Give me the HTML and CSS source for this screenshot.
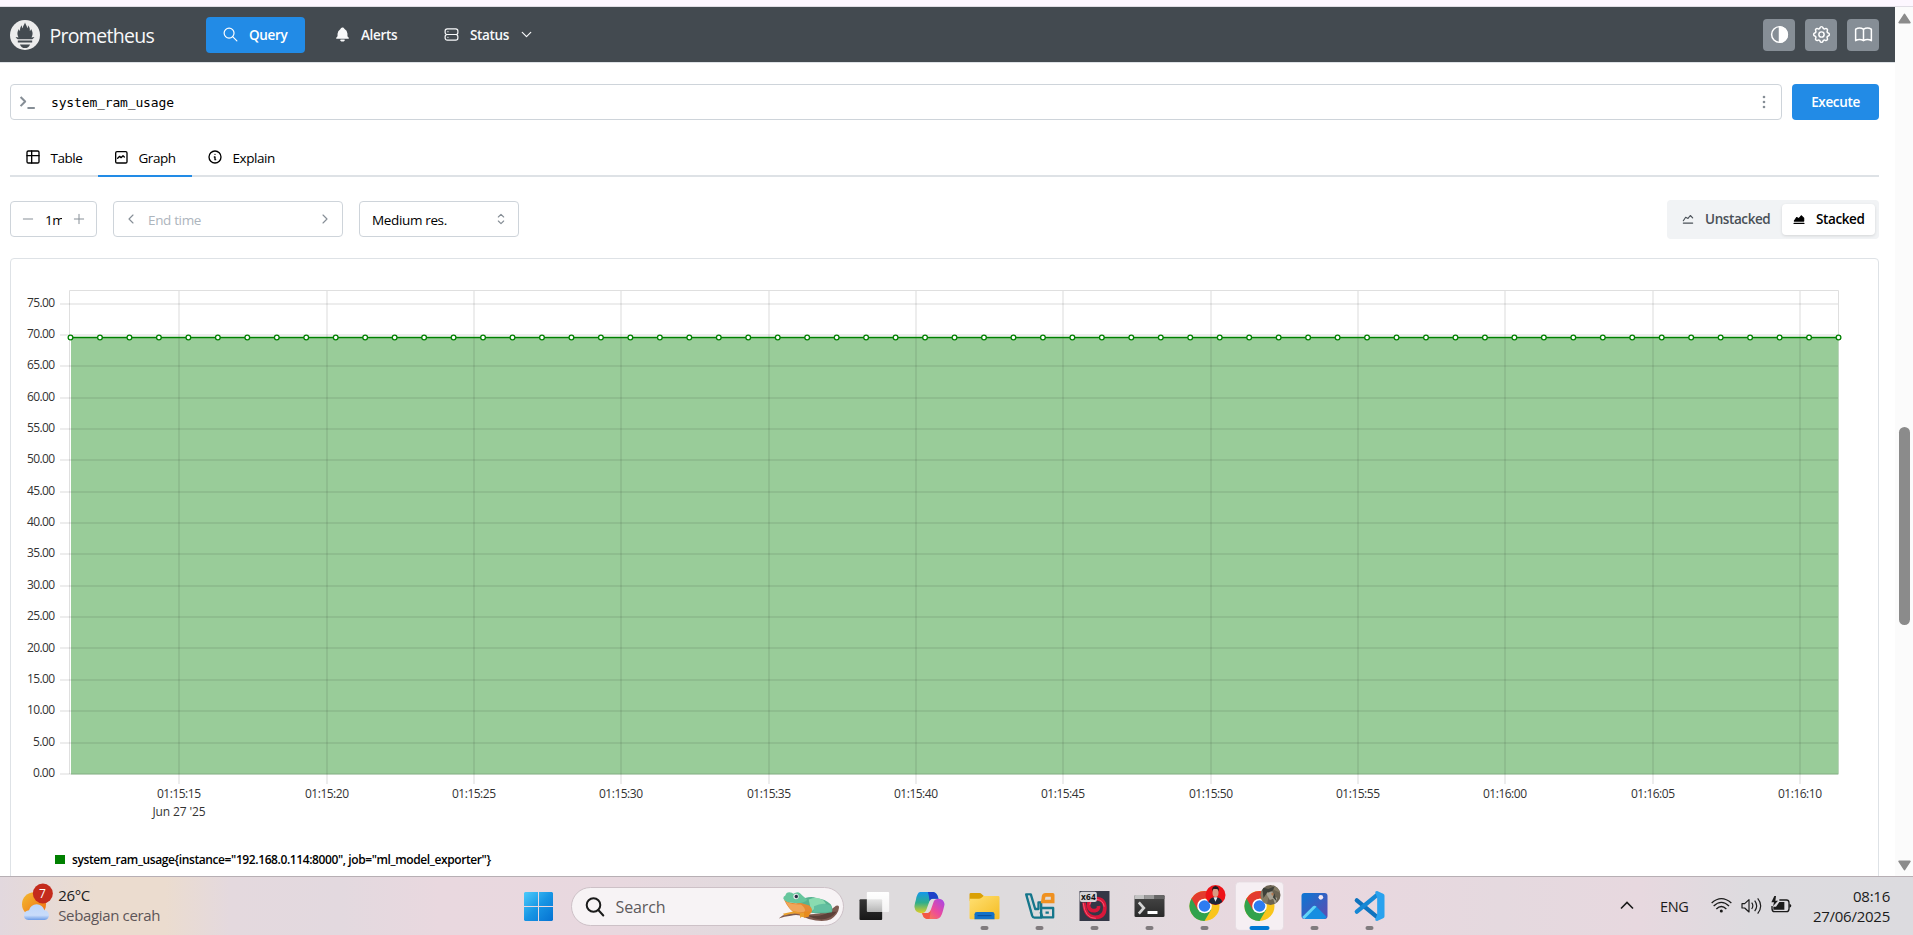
FILE: index.html
```html
<!DOCTYPE html>
<html lang="en">
<head>
<meta charset="utf-8">
<title>Prometheus Time Series Collection and Processing Server</title>
<link rel="stylesheet" href="styles.css">
</head>
<body>
<div class="browser-edge"></div>
<div class="viewport">
  <div class="page">
    <header class="header">
      <svg class="logo" viewBox="0 0 28 30" preserveAspectRatio="none"><ellipse cx="14" cy="15" rx="14" ry="15" fill="#ececec"/><path d="M14 2.500c.6 2.300 1.900 3.200 2 5.800.9-.8.8-2 .7-3 1.700 1.900 2 3.800 1.800 5.700.7-.4 1-1.100 1.200-2 1.400 2.700 2.100 4.800.4 8.500l2.700-.5c-.6 1.100-1.200 1.700-2 2.300H7.200c-.9-.7-1.500-1.300-2-2.300l2.700.5C6.300 14 6.700 11.500 8.300 9c.1.900.5 1.600 1.100 2-.2-2 .2-3.900 1.700-5.700 0 1.100-.1 2.200.7 3 .2-2.600 1.700-3.300 2.200-5.800zM7.300 20.500h13.400v1.900H7.300zM9.300 24.400h9.400c-.7 2.400-2.500 3.600-4.700 3.600s-4-1.200-4.700-3.600z" fill="#434a50"/></svg>
      <span class="brand">Prometheus</span>
      <nav class="nav">
        <a class="nav-link active"><svg class="ti" viewBox="0 0 24 24"><circle cx="10" cy="10" r="7"/><path d="M21 21l-6-6"/></svg><span>Query</span></a>
        <a class="nav-link"><svg class="ti" viewBox="0 0 24 24"><path fill="currentColor" stroke="none" d="M14.235 19c.865 0 1.322 1.024.745 1.668A4 4 0 0 1 12 22a4 4 0 0 1-2.980-1.332c-.552-.616-.158-1.579.634-1.661l.110-.006zM12 2c1.358 0 2.506.903 2.875 2.141l.046.171.008.043a8.013 8.013 0 0 1 4.024 6.069l.028.287L19 11v2.931l.021.136a3 3 0 0 0 1.143 1.847l.167.117.162.099c.860.487.560 1.766-.377 1.864L20 18H4c-1.028 0-1.387-1.364-.493-1.870a3 3 0 0 0 1.472-2.063L5 13.924l.001-2.970A8 8 0 0 1 8.822 4.500l.248-.146.010-.043a3 3 0 0 1 2.562-2.290l.182-.017z"/></svg><span>Alerts</span></a>
        <a class="nav-link"><svg class="ti" viewBox="0 0 24 24"><rect x="3" y="4" width="18" height="8" rx="3"/><rect x="3" y="12" width="18" height="8" rx="3"/><path d="M7 8v.01M7 16v.01"/></svg><span>Status</span><svg class="ti chev" viewBox="0 0 24 24"><path d="M6 9l6 6 6-6"/></svg></a>
      </nav>
      <div class="actions">
        <button class="action"><svg class="ti" viewBox="0 0 24 24"><circle cx="12" cy="12" r="9"/><path fill="currentColor" d="M12 3a9 9 0 0 1 0 18z"/></svg></button>
        <button class="action"><svg class="ti" viewBox="0 0 24 24"><path d="M10.325 4.317c.426-1.756 2.924-1.756 3.350 0a1.724 1.724 0 0 0 2.573 1.066c1.543-.94 3.310.826 2.370 2.370a1.724 1.724 0 0 0 1.065 2.572c1.756.426 1.756 2.924 0 3.350a1.724 1.724 0 0 0-1.066 2.573c.94 1.543-.826 3.310-2.370 2.370a1.724 1.724 0 0 0-2.572 1.065c-.426 1.756-2.924 1.756-3.350 0a1.724 1.724 0 0 0-2.573-1.066c-1.543.94-3.310-.826-2.370-2.370a1.724 1.724 0 0 0-1.065-2.572c-1.756-.426-1.756-2.924 0-3.350a1.724 1.724 0 0 0 1.066-2.573c-.94-1.543.826-3.310 2.370-2.370 1 .608 2.296.070 2.572-1.065z"/><circle cx="12" cy="12" r="3"/></svg></button>
        <button class="action"><svg class="ti" viewBox="0 0 24 24"><path d="M3 19a9 9 0 0 1 9 0 9 9 0 0 1 9 0M3 6a9 9 0 0 1 9 0 9 9 0 0 1 9 0M3 6v13M12 6v13M21 6v13"/></svg></button>
      </div>
    </header>

    <main class="main">
      <div class="query-row">
        <div class="query-input">
          <svg class="ti prompt" viewBox="0 0 24 24"><path d="M5 6.500l5 5-5 5M12.500 18.500h8"/></svg>
          <code>system_ram_usage</code>
          <svg class="dots" viewBox="0 0 4 14"><circle cx="2" cy="2" r="1.300"/><circle cx="2" cy="7" r="1.300"/><circle cx="2" cy="12" r="1.300"/></svg>
        </div>
        <button class="execute">Execute</button>
      </div>

      <div class="tabs">
        <a class="tab tab-table"><svg class="ti" viewBox="0 0 24 24"><rect x="3" y="3" width="18" height="18" rx="2"/><path d="M3 10h18M10 3v18"/></svg><span>Table</span></a>
        <a class="tab tab-graph active"><svg class="ti" viewBox="0 0 24 24"><rect x="4" y="4" width="17" height="17" rx="2"/><path d="M7 14l3-3 2 2 3-3 2 2"/></svg><span>Graph</span></a>
        <a class="tab tab-explain"><svg class="ti" viewBox="0 0 24 24"><circle cx="12" cy="12" r="9"/><path d="M12 8h.01M11 12h1v4h1"/></svg><span>Explain</span></a>
      </div>

      <div class="controls">
        <div class="field range"><svg class="ti" viewBox="0 0 24 24"><path d="M4 12h16"/></svg><span class="range-value">1m</span><svg class="ti" viewBox="0 0 24 24"><path d="M4 12h16M12 4v16"/></svg></div>
        <div class="field end-time"><svg class="ti" viewBox="0 0 24 24"><path d="M15 6l-6 6 6 6"/></svg><span>End time</span><svg class="ti" viewBox="0 0 24 24"><path d="M9 6l6 6-6 6"/></svg></div>
        <div class="field resolution"><span>Medium res.</span><svg class="ti" viewBox="0 0 24 24"><path d="M8 9l4-4 4 4M8 15l4 4 4-4"/></svg></div>
        <div class="segmented">
          <span class="segment"><svg class="ti" viewBox="0 0 24 24"><path d="M4 19h16M4 15l4-6 4 2 4-5 4 4"/></svg><b>Unstacked</b></span>
          <span class="segment selected"><svg class="ti" viewBox="0 0 24 24"><path d="M3.500 19.500h17"/><path fill="currentColor" d="M4 15.500l4-6 4 2 4-5 4 4v5z"/></svg><b>Stacked</b></span>
        </div>
      </div>

      <section class="card">
        <svg class="chart" viewBox="11 259 1867 572" width="1867" height="572">
          <path fill="none" stroke="#dfdfdf" d="M69.500 774V290.500H1838.500V774"/>
          <path fill="#99cc99" d="M71 337h1767.500v437.500H71z"/>
          <path class="grid" d="M60 304H1838M60 335H1838M60 366H1838M60 398H1838M60 429H1838M60 460H1838M60 492H1838M60 523H1838M60 554H1838M60 586H1838M60 617H1838M60 648H1838M60 680H1838M60 711H1838M60 743H1838M60 774H1838"/>
          <path class="grid" d="M179 291V784M327 291V784M474 291V784M621 291V784M769 291V784M916 291V784M1063 291V784M1211 291V784M1358 291V784M1505 291V784M1653 291V784M1800 291V784"/>
          <path stroke="#008000" stroke-width="1.500" d="M71 337.500H1838.500"/>
          <path class="point-ring" d="M70.500 337.500H1839"/>
          <path class="point-core" d="M70.500 337.500H1839"/>
          <g class="axis axis-y">
            <text x="55" y="307" textLength="28">75.00</text><text x="55" y="338" textLength="28">70.00</text><text x="55" y="369" textLength="28">65.00</text><text x="55" y="401" textLength="28">60.00</text><text x="55" y="432" textLength="28">55.00</text><text x="55" y="463" textLength="28">50.00</text><text x="55" y="495" textLength="28">45.00</text><text x="55" y="526" textLength="28">40.00</text><text x="55" y="557" textLength="28">35.00</text><text x="55" y="589" textLength="28">30.00</text><text x="55" y="620" textLength="28">25.00</text><text x="55" y="652" textLength="28">20.00</text><text x="55" y="683" textLength="28">15.00</text><text x="55" y="714" textLength="28">10.00</text><text x="55" y="746" textLength="22">5.00</text><text x="55" y="777" textLength="22">0.00</text>
          </g>
          <g class="axis axis-x">
            <text x="179" y="798" textLength="44">01:15:15</text><text x="179" y="816" textLength="53">Jun 27 '25</text><text x="327" y="798" textLength="44">01:15:20</text><text x="474" y="798" textLength="44">01:15:25</text><text x="621" y="798" textLength="44">01:15:30</text><text x="769" y="798" textLength="44">01:15:35</text><text x="916" y="798" textLength="44">01:15:40</text><text x="1063" y="798" textLength="44">01:15:45</text><text x="1211" y="798" textLength="44">01:15:50</text><text x="1358" y="798" textLength="44">01:15:55</text><text x="1505" y="798" textLength="44">01:16:00</text><text x="1653" y="798" textLength="44">01:16:05</text><text x="1800" y="798" textLength="44">01:16:10</text>
          </g>
        </svg>
        <div class="legend"><i></i><span>system_ram_usage{instance="192.168.0.114:8000", job="ml_model_exporter"}</span></div>
      </section>
    </main>
  </div>
  <div class="scrollbar">
    <svg viewBox="0 0 12 10"><path d="M6 1.200L11 8.800H1z"/></svg>
    <div class="thumb"></div>
    <svg viewBox="0 0 12 10"><path d="M6 8.800L11 1.200H1z"/></svg>
  </div>
</div>

<footer class="taskbar">
  <div class="weather">
    <svg viewBox="63 430 98 114">
      <defs><linearGradient id="sun" x2="1" y2="1"><stop offset="0" stop-color="#f3bb30"/><stop offset="1" stop-color="#f06b12"/></linearGradient><linearGradient id="cloud" x2="0" y2="1"><stop offset="0" stop-color="#bcd6fb"/><stop offset=".7" stop-color="#c9dcfa"/><stop offset="1" stop-color="#6d9de8"/></linearGradient></defs>
      <circle cx="102" cy="494" r="36" fill="url(#sun)"/>
      <path d="M85 541q-14-2-13-15 2-13 15-14 5-17 23-18 18 1 23 18 13 1 14 15-1 12-13 14z" fill="url(#cloud)"/>
      <circle cx="128.500" cy="461.500" r="30" fill="#c42b1c"/>
      <text x="127.500" y="474" text-anchor="middle" fill="#fff" font-size="36">7</text>
    </svg>
    <div class="weather-text"><span>26°C</span><span class="muted">Sebagian cerah</span></div>
  </div>

  <div class="apps">
    <svg class="start" viewBox="0 0 29 29"><defs><linearGradient id="win" gradientUnits="userSpaceOnUse" x2="29" y2="29"><stop offset="0" stop-color="#4ccbfb"/><stop offset=".5" stop-color="#1795e4"/><stop offset="1" stop-color="#0672d2"/></linearGradient></defs><path fill="url(#win)" d="M1 0h13v14H0V1zM15 0h13l1 1v13H15zM0 15h14v14H1l-1-1zM15 15h14v13l-1 1H15z"/></svg>
    <div class="search">
      <svg class="magnifier" viewBox="0 0 20 20"><circle cx="8.500" cy="8" r="6.800"/><path d="M13.300 13l5 5.500"/></svg>
      <span>Search</span>
      <svg class="frog" viewBox="840 64 186 98">
        <path d="M842 149q10-10 28-14 30-6 60 2 40-2 60-12 14-4 24-14 10-3 9 6-2 20-24 34-16 8-46 4-18-2-34-10-20-10-40-4-20 2-37 8z" fill="#7e5a50"/>
        <path d="M930 139q35 8 66-10l20 0q-16 22-46 23-24-2-40-13z" fill="#5d4038"/>
        <path d="M902 98q30-20 54-10 26 2 42 18 8 12 4 24-32 6-62 2-30-8-38-34z" fill="#57b391"/>
        <path d="M932 92q24-12 44 2l8 10q-24 6-44 24z" fill="#8adbb0"/>
        <path d="M948 112q28-14 50-2 6 8 2 18-28 4-56 3 6-10 4-19z" fill="#62bfa0"/>
        <path d="M858 92q20 14 48 10l28 8q14 14 4 24-26 6-46 0-22-14-34-42z" fill="#e58a35"/>
        <path d="M863 99q22 10 46 8 14 10 12 22-30 4-44-8z" fill="#f0a65a"/>
        <path d="M856 90q-1-8 6-10 2-10 12-10 9 1 12 5 12-8 20-2 8 8 22 20-12 14-48 9-18-2-24-12z" fill="#67c69d"/>
        <circle cx="894" cy="83" r="8" fill="#e4e5e8"/><ellipse cx="895" cy="83" rx="5" ry="5.500" fill="#272b42"/>
        <path d="M855 135l34-8 20 4-36 5-14 4zM905 134q12-5 18 2l-4 10-8-2-4 4z" fill="#eaa02c"/>
        <path d="M918 128h20l-6 16-14 3z" fill="#e88b1d"/>
      </svg>
    </div>
    <svg class="app" viewBox="1042.500 21 165 174"><defs><linearGradient id="tv" x2="0" y2="1"><stop offset="0" stop-color="#363636"/><stop offset="1" stop-color="#171717"/></linearGradient><linearGradient id="tv2" x2="0" y2="1"><stop offset="0" stop-color="#fff"/><stop offset="1" stop-color="#fff" stop-opacity=".66"/></linearGradient></defs><rect x="1080" y="88" width="68" height="62" rx="3" fill="url(#tv)"/><rect x="1102" y="66" width="67" height="60" rx="3" fill="url(#tv2)"/></svg>
    <svg class="app" viewBox="1207.500 21 165 174">
      <defs><linearGradient id="cp1" x2="0" y2="1"><stop offset="0" stop-color="#1597ec"/><stop offset=".5" stop-color="#2fae8c"/><stop offset="1" stop-color="#e5d021"/></linearGradient><linearGradient id="cp2" x1="1" x2="0" y2="1"><stop offset="0" stop-color="#a046ed"/><stop offset=".5" stop-color="#ec4b9c"/><stop offset="1" stop-color="#ff8b35"/></linearGradient></defs>
      <path d="M1262 66h40q12 2 15 20h-17q-8 0-11 10l-9 25q-4 9-15 9-18-2-20-18-1-4 4-22 4-23 13-24z" fill="url(#cp1)"/>
      <path d="M1285 66h17q10 2 15 20h-17q-7 0-10 7-1-16-5-27z" fill="#1e42c8"/>
      <path d="M1318 86q15 1 17 16 0 4-5 22-5 22-18 23h-30q-12-2-14-18h14q9 0 12-10l9-25q3-8 15-8z" fill="url(#cp2)"/>
      <path d="M1268 129h14q9 0 12-10l-4 28h-8q-11-2-14-18z" fill="#f35744"/>
    </svg>
    <svg class="app" viewBox="52.500 21 165 174">
      <defs><linearGradient id="fold" x2="1" y2="1"><stop offset="0" stop-color="#ffe073"/><stop offset="1" stop-color="#f5bc22"/></linearGradient></defs>
      <path d="M90 73q0-4 4-4h26q4 0 7 4l6 5v14H90z" fill="#daa005"/><path d="M90 86h29q5 0 9-4l4-4h44q4 0 4 4v62q0 4-4 4H94q-4 0-4-4z" fill="url(#fold)"/>
      <path d="M105 148v-15q0-7 7-7h46q7 0 7 7v15z" fill="#1272c8"/><path d="M114 137h42" stroke="#0a4a94" stroke-width="3"/><rect class="running" x="123" y="168" width="24" height="12" rx="6"/>
    </svg>
    <svg class="app" viewBox="217.500 21 165 174">
      <g fill="none" stroke="#15768b" stroke-width="7" stroke-linejoin="round"><path d="M260 73h14l13 44h10V97h8v46h-20q-5 0-7-6z"/><path d="M305 114h36v28h-32l-6-16M318 128h10"/></g><path d="M268 76l15 56" stroke="#c8d7d9" stroke-width="2.500"/>
      <path d="M318 69h22q5 0 5 5v26h-41l3-22q2-9 11-9z" fill="#ef9120"/><path d="M318 80h16v9h-18z" fill="#e0dbd8"/><rect class="running" x="288" y="168" width="24" height="12" rx="6"/>
    </svg>
    <svg class="app" viewBox="382.500 21 165 174">
      <rect x="420" y="63" width="90" height="90" fill="#343746"/><path d="M434 98q2 44 34 44 28-1 28-29-1-27-27-27-22 2-22 21 2 16 19 15 13-2 11-14" fill="none" stroke="#d9173a" stroke-width="11"/><path d="M431 98q5 48 38 47" fill="none" stroke="#f65a72" stroke-width="3"/><path d="M451 104q2-15 19-16 22 2 24 22" fill="none" stroke="#f65a72" stroke-width="3"/>
      <rect x="421" y="65" width="51" height="31" rx="6" fill="#d6d4d6"/><text x="446.500" y="90" text-anchor="middle" font-size="25" font-weight="bold" textLength="44" fill="#111">x64</text><rect class="running" x="453" y="168" width="24" height="12" rx="6"/>
    </svg>
    <svg class="app" viewBox="547.500 21 165 174">
      <defs><linearGradient id="term" x2="0" y2="1"><stop offset="0" stop-color="#474747"/><stop offset="1" stop-color="#292929"/></linearGradient></defs>
      <rect x="585" y="75" width="90" height="66" rx="4" fill="url(#term)"/><path d="M585 87v-8q0-4 4-4h26v12z" fill="#c3c3c3"/><path d="M615 75h30v12h-30z" fill="#999"/><path d="M645 75h26q4 0 4 4v8h-30z" fill="#666"/><path d="M598 97l15 17-15 17" fill="none" stroke="#d5d5d5" stroke-width="8"/><rect x="624" y="123" width="30" height="9" rx="1" fill="#fff"/><rect class="running" x="618" y="168" width="24" height="12" rx="6"/>
    </svg>
    <svg class="app" viewBox="712.500 21 165 174">
      <g id="chrome"><circle cx="795" cy="108" r="45" fill="#f9c51b"/><path d="M756 85.500A45 45 0 0 0 795 153l20-34-20-11z" fill="#31a24c"/><path d="M756 85.500A45 45 0 0 1 834 85.500H795l-20 34z" fill="#e33b2e"/><circle cx="795" cy="108" r="22" fill="#fff"/><circle cx="795" cy="108" r="17.500" fill="#2d7cf1"/></g>
      <circle cx="828" cy="75" r="30" fill="#ee1218"/><path d="M807 96q4-12 16-14h10q13 3 15 14-19 17-41 0z" fill="#1d2837"/><path d="M822 82l6 13 6-13z" fill="#e8edf2"/><ellipse cx="828" cy="68" rx="9" ry="13" fill="#d99a83"/><path d="M818 65q-2-16 10-17 12 1 10 17-2-7-5-8-6 1-10-1-4 2-5 9z" fill="#1d1b20"/><rect class="running" x="783" y="168" width="24" height="12" rx="6"/>
    </svg>
    <svg class="app" viewBox="877.500 21 165 174">
      <rect x="888" y="36" width="144" height="145" rx="12" fill="#f6eff3" stroke="#e3dadf" stroke-width="2"/><use href="#chrome" x="165"/>
      <clipPath id="av"><circle cx="993" cy="75" r="30"/></clipPath><g clip-path="url(#av)"><path fill="#6b6352" d="M960 40h70v70h-70z"/><path d="M960 60l30 10-8 34h-20zM1000 45l25 5-3 18-18-8z" fill="#847b65"/><path d="M975 62l13 6 9-8 6 18 10 6-6 20-6-18-10 4z" fill="#a7a294"/><path d="M968 52l18 5 20-8-8 15-14 3-12 17zM1005 70l6 24-11-12z" fill="#3d4039"/><path d="M996 68l6 2-1 7-5-2z" fill="#b5764f"/></g><rect x="930" y="168" width="60" height="12" rx="6" fill="#0078d4"/>
    </svg>
    <svg class="app" viewBox="1042.500 21 165 174">
      <defs><linearGradient id="ph" x2="1" y2="1"><stop offset="0" stop-color="#0a77d4"/><stop offset="1" stop-color="#5f4bb0"/></linearGradient></defs>
      <rect x="1086" y="69" width="78" height="78" rx="9" fill="url(#ph)"/><path d="M1119 110q6-5 12 0l31 31q-3 6-9 6h-56z" fill="#168ee1"/><path d="M1088 141l31-31q6-5 12 0l-36 37q-5-2-7-6z" fill="#62d5f7"/><circle cx="1144" cy="82" r="7" fill="#f4e9f2"/><rect class="running" x="1113" y="168" width="24" height="12" rx="6"/>
    </svg>
    <svg class="app" viewBox="1207.500 21 165 174">
      <path d="M1252 91l62 51" fill="none" stroke="#0e73be" stroke-width="13" stroke-linecap="round"/><path d="M1252 125l62-51" stroke="#1688d5" stroke-width="13" stroke-linecap="round"/><path d="M1313 63l18 8q4 2 4 6v62q0 4-4 6l-18 8q-4 0-6-3l6-17V83l-6-17q2-3 6-3z" fill="#2aa2ee"/><rect class="running" x="1278" y="168" width="24" height="12" rx="6"/>
    </svg>
  </div>

  <div class="tray">
    <svg class="tray-chev" viewBox="0 0 14 9"><path d="M1 7.500l6-6 6 6"/></svg>
    <span class="lang">ENG</span>
    <svg class="tray-icons" viewBox="455 468 242 56">
      <g fill="none" stroke="#1b1b1b" stroke-width="4"><path d="M457 489q29-26 59 0" /><path d="M463 498q23-22 46 0"/><path d="M471 507q15-15 30 0"/></g><circle cx="486" cy="513" r="4.500" fill="#1b1b1b"/>
      <g fill="none" stroke="#1b1b1b" stroke-width="3.500"><path d="M548 491h8l13-12v37l-13-12h-8z" stroke-linejoin="round"/><path d="M577 488q7 9 0 19M586 482q12 16 0 31M595 475q18 22 0 46"/></g>
      <path d="M660 480h21q8 0 8 8v18q0 9-8 9h-35q-8 0-8-9v-8" fill="none" stroke="#1b1b1b" stroke-width="4"/><path d="M660 486h15v23h-33v-9h8zM690 492q6 0 6 5t-6 6z" fill="#1b1b1b"/><path d="M645 468l-9 19h8l-3 12 15-17h-8l2-14z" fill="#1b1b1b"/>
    </svg>
    <div class="clock"><span>08:16</span><span class="date">27/06/2025</span></div>
  </div>
</footer>
</body>
</html>
```
FILE: styles.css
```css
* { box-sizing: border-box; }
body {
  margin: 0; width: 1913px; height: 935px; overflow: hidden;
  display: flex; flex-direction: column;
  font-family: "Open Sans", "Noto Sans", sans-serif; font-size: 13.5px; color: #000; background: #fff;
}
svg { display: block; flex: none; }
span, b, code { white-space: nowrap; }
button { border: 0; padding: 0; font: inherit; }
.ti { width: 16px; height: 16px; fill: none; stroke: currentColor; stroke-width: 2; stroke-linecap: round; stroke-linejoin: round; }

.browser-edge { height: 7px; background: #fdf7ff; border-bottom: 1px solid #e0dde4; flex: none; }
.viewport { display: flex; height: 869px; flex: none; }
.page { width: 1895px; overflow: hidden; }

.header { display: flex; align-items: center; height: 56px; padding: 0 16px 0 10px; background: #434a50; border-bottom: 1px solid #dee2e6; color: #f8f9fa; }
.logo { width: 30px; height: 30px; }
.brand { margin-left: 9.500px; width: 156.500px; padding-top: 2px; font-size: 19.500px; letter-spacing: -.7px; }
.nav { display: flex; gap: 14px; font-weight: 600; letter-spacing: -.35px; }
.nav-link { display: flex; align-items: center; height: 36px; width: 99px; padding-left: 16px; border-radius: 4px; }
.nav-link .ti { width: 17px; height: 17px; margin-right: 10px; stroke-width: 1.700; }
.nav-link:nth-child(2) { width: 95px; padding-left: 15px; }
.nav-link:nth-child(3) { width: 120px; padding-left: 15px; }
.nav-link .chev { margin: 0 13.500px 0 auto; }
.nav-link.active { background: #228be6; color: #fff; }
.actions { display: flex; gap: 10px; margin-left: auto; }
.action { display: grid; place-items: center; width: 32px; height: 32px; border-radius: 4px; background: #868e96; color: #fff; }
.action .ti { width: 21px; height: 21px; stroke-width: 1.700; }

.main { padding: 21px 16px 0 10px; }
.query-row { display: flex; gap: 10px; }
.query-input { display: flex; align-items: center; width: 1772px; height: 36px; border: 1px solid #ced4da; border-radius: 4px; padding: 0 15px 0 5px; }
.prompt { width: 22px; height: 22px; color: #868e96; margin-right: 13px; stroke-width: 2.200; stroke-linecap: butt; }
.query-input code { padding-top: 2px; font: 13px/18px "DejaVu Sans Mono", monospace; letter-spacing: -.15px; }
.dots { width: 4px; height: 14px; margin-left: auto; fill: #868e96; }
.execute { width: 87px; border-radius: 4px; background: #228be6; color: #fff; font-weight: 600; letter-spacing: -.35px; }

.tabs { display: flex; height: 37px; margin-top: 20px; border-bottom: 2px solid #dee2e6; letter-spacing: -.45px; }
.tab { display: flex; align-items: center; gap: 9.500px; height: 37px; padding: 0 0 2px 15px; border-bottom: 2px solid transparent; }
.tab span { padding-top: 2px; }
.tab-table { width: 88px; }
.tab-graph { width: 94px; }
.tab-explain { width: 104px; }
.tab.active { border-color: #228be6; }

.controls { display: flex; align-items: center; height: 40px; margin-top: 22px; letter-spacing: -.35px; }
.field { display: flex; align-items: center; height: 36px; border: 1px solid #ced4da; border-radius: 4px; }
.field span { padding-top: 1px; }
.field .ti { color: #868e96; stroke-width: 1.700; }
.range { width: 87px; padding-left: 10px; }
.range .ti { width: 14px; height: 14px; }
.range-value { width: 17px; overflow: hidden; margin: 0 10px; }
.end-time { width: 230px; margin-left: 16px; padding: 0 9px; color: #adb5bd; }
.end-time span { margin: 0 auto 0 9px; }
.resolution { width: 160px; margin-left: 16px; padding: 0 9px 0 12px; justify-content: space-between; }
.segmented { display: flex; align-items: center; width: 212px; height: 39px; margin-left: auto; padding: 4px; border-radius: 4px; background: #f1f3f5; }
.segmented .ti { width: 14px; height: 14px; }
.segment { display: flex; align-items: center; gap: 10px; height: 31px; width: 111px; padding-left: 10px; color: #495057; }
.segment b { font-weight: 600; letter-spacing: -.4px; }
.segment.selected { width: 93px; border-radius: 4px; background: #fff; color: #000; box-shadow: 0 1px 3px rgba(0,0,0,.12); }

.card { height: 660px; margin-top: 19px; border: 1px solid #dee2e6; border-radius: 4px; }
.grid { stroke: #000; stroke-opacity: .07; stroke-width: 2; }
.point-ring, .point-core { fill: none; stroke-linecap: round; stroke-dasharray: 0 29.467; }
.point-ring { stroke: #008000; stroke-width: 6; }
.point-core { stroke: #fff; stroke-width: 3.400; }
.axis { font-size: 12px; fill: #333; }
.axis-y { text-anchor: end; }
.axis-x { text-anchor: middle; }
.legend { display: flex; align-items: center; height: 18px; margin: 19px 0 0 44px; font-size: 12px; font-weight: 600; letter-spacing: -.4px; }
.legend i { width: 10px; height: 9px; margin-right: 7px; background: #008000; }

.scrollbar { width: 18px; background: #fbfbfb; padding: 6px 3px 5px; display: flex; flex-direction: column; align-items: center; justify-content: space-between; }
.scrollbar svg { width: 13px; height: 11px; fill: #8b8b8b; stroke: #8b8b8b; stroke-width: 1.500; stroke-linejoin: round; }
.thumb { width: 11px; height: 198px; margin: 167px 0 0 1px; border-radius: 6px; background: #8b8b8b; }

.taskbar {
  display: flex; height: 59px; flex: none; border-top: 1px solid #b7afb4;
  font-size: 15px; color: #1b1b1b;
  background: linear-gradient(90deg, #e2d8de 0, #ebdccf 95px, #ebdccf 165px, #e4d9de 230px, #e3d9df 340px, #e9d8df 440px, #e8d8df 620px, #dedbdd 820px, #dedbdd 1050px, #e5d9df 1190px, #ead7df 1290px, #e5d9df 1500px, #e7d8df 1640px, #dddbdf 1750px, #dcdbdf 1913px);
}
.weather { display: flex; width: 524px; padding: 6px 0 0 21px; }
.weather svg { width: 32.700px; height: 38px; }
.weather-text { display: flex; flex-direction: column; margin: 2px 0 0 4.500px; line-height: 20px; letter-spacing: -.35px; }
.muted { color: #5d5558; }
.apps { display: flex; width: 873.500px; }
.start { width: 29px; height: 29px; margin-top: 15px; }
.search { display: flex; align-items: center; width: 274px; height: 39px; margin: 10px 3.500px 0 17.500px; padding: 0 3px 0 13px; border: 1px solid #cdc1c7; border-radius: 20px; background: #f7f3f5; color: #5d5a5c; font-size: 16px; letter-spacing: -.1px; }
.magnifier { width: 20px; height: 20px; margin-right: 11px; fill: none; stroke: #1b1b1b; stroke-width: 2; stroke-linecap: round; }
.frog { width: 62px; height: 33px; margin-left: auto; }
.app { width: 55px; height: 58px; margin-left: -.5px; margin-right: .5px; }
.running { fill: #807b7e; }
.tray { display: flex; flex: 1; align-items: center; padding: 0 23px 0 222.500px; }
.tray-chev { width: 14px; height: 9px; margin-top: -1px; fill: none; stroke: #1b1b1b; stroke-width: 1.600; }
.lang { width: 51px; margin-left: 26px; font-size: 14.500px; letter-spacing: -.3px; }
.tray-icons { width: 80.700px; height: 18.700px; margin-top: -1px; }
.clock { display: flex; flex-direction: column; align-items: flex-end; margin-left: auto; padding-bottom: 1px; line-height: 20px; font-size: 15px; letter-spacing: -.25px; }
```
